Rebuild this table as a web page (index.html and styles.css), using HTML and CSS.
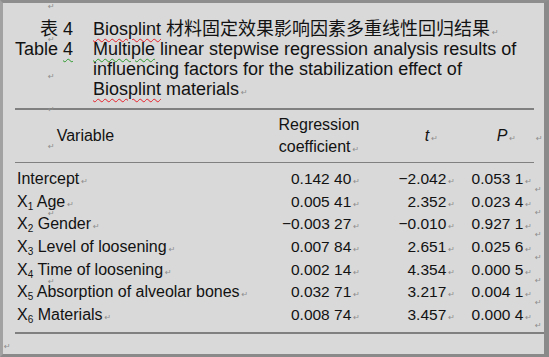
FILE: index.html
```html
<!DOCTYPE html>
<html lang="zh-CN">
<head>
<meta charset="utf-8">
<title>Table 4</title>
<link rel="stylesheet" href="styles.css">
</head>
<body>
<div class="page">
  <span class="stray s1">↵</span>
  <span class="stray s2">↵</span>
  <span class="stray s3">↵</span>
  <span class="stray s4">↵</span>
  <span class="stray s5">↵</span>
  <span class="stray s6">↵</span>

  <div class="caption">
    <div class="cap-row">
      <div class="cap-label"><span class="cn">表</span> 4</div>
      <div class="cap-text"><span class="spell">Biosplint</span> <span class="cn">材料固定效果影响因素多重线性回归结果</span><span class="pm">↵</span></div>
    </div>
    <div class="cap-row">
      <div class="cap-label">Table <span class="gram">4</span></div>
      <div class="cap-text"><span class="gram">Multiple</span> linear stepwise regression analysis results of influencing factors for the stabilization effect of <span class="spell">Biosplint</span> materials<span class="pm">↵</span></div>
    </div>
  </div>

  <table class="reg">
    <colgroup>
      <col class="c1"><col class="c2"><col class="c3"><col class="c4"><col class="c5">
    </colgroup>
    <thead>
      <tr>
        <th class="h-var"><span class="pm low">↵</span>Variable</th>
        <th class="h-coef">Regression<br>coefficient<span class="pm">↵</span></th>
        <th class="h-t"><i>t</i><span class="pm">↵</span></th>
        <th class="h-p"><i>P</i><span class="pm">↵</span></th>
        <th class="end"><span class="pm">↵</span></th>
      </tr>
    </thead>
    <tbody>
      <tr><td class="var">Intercept<span class="pm">↵</span></td><td class="n2">0.142 40<span class="pm">↵</span></td><td class="n3">−2.042<span class="pm">↵</span></td><td class="n4">0.053 1<span class="pm">↵</span></td><td class="end"><span class="pm rowend">↵</span></td></tr>
      <tr><td class="var">X<sub>1</sub> Age<span class="pm">↵</span></td><td class="n2">0.005 41<span class="pm">↵</span></td><td class="n3">2.352<span class="pm">↵</span></td><td class="n4">0.023 4<span class="pm">↵</span></td><td class="end"><span class="pm rowend">↵</span></td></tr>
      <tr><td class="var">X<sub>2</sub> Gender<span class="pm">↵</span></td><td class="n2">−0.003 27<span class="pm">↵</span></td><td class="n3">−0.010<span class="pm">↵</span></td><td class="n4">0.927 1<span class="pm">↵</span></td><td class="end"><span class="pm rowend">↵</span></td></tr>
      <tr><td class="var">X<sub>3</sub> Level of loosening<span class="pm">↵</span></td><td class="n2">0.007 84<span class="pm">↵</span></td><td class="n3">2.651<span class="pm">↵</span></td><td class="n4">0.025 6<span class="pm">↵</span></td><td class="end"><span class="pm rowend">↵</span></td></tr>
      <tr><td class="var">X<sub>4</sub> Time of loosening<span class="pm">↵</span></td><td class="n2">0.002 14<span class="pm">↵</span></td><td class="n3">4.354<span class="pm">↵</span></td><td class="n4">0.000 5<span class="pm">↵</span></td><td class="end"><span class="pm rowend">↵</span></td></tr>
      <tr><td class="var">X<sub>5</sub> Absorption of alveolar bones<span class="pm">↵</span></td><td class="n2">0.032 71<span class="pm">↵</span></td><td class="n3">3.217<span class="pm">↵</span></td><td class="n4">0.004 1<span class="pm">↵</span></td><td class="end"><span class="pm rowend">↵</span></td></tr>
      <tr class="last"><td class="var">X<sub>6</sub> Materials<span class="pm">↵</span></td><td class="n2">0.008 74<span class="pm">↵</span></td><td class="n3">3.457<span class="pm">↵</span></td><td class="n4">0.000 4<span class="pm">↵</span></td><td class="end"><span class="pm rowend">↵</span></td></tr>
    </tbody>
  </table>

  <div class="endmark"><span class="pm">↵</span></div>
</div>
</body>
</html>
```

FILE: styles.css
```css
html, body {
  margin: 0;
  padding: 0;
  background: #d9d9d9;
}

body {
  font-family: "Liberation Sans", Arial, "Noto Sans CJK SC", sans-serif;
  color: #121212;
}

.page {
  position: relative;
  box-sizing: border-box;
  width: 549px;
  height: 357px;
  overflow: hidden;
  background: #d9d9d9;
  border-left: 3px solid #a2a2a2;
  border-top: 3px solid #8e8e8e;
  border-right: 5px solid #8a8a8a;
  border-bottom: 3px solid #8a8a8a;
  padding: 16px 0 0 12px;
}

/* Word formatting marks */
.pm {
  font-family: "DejaVu Sans", sans-serif;
  font-size: 8px;
  line-height: 0;
  color: #8d8d8d;
  margin-left: 2px;
  font-style: normal;
  font-weight: normal;
}

.pm.low {
  margin-left: 0;
  margin-right: 2px;
  vertical-align: -8px;
}

.pm.rowend {
  margin-left: 1px;
  vertical-align: -8px;
}

.stray {
  position: absolute;
  left: 45px;
  font-family: "DejaVu Sans", sans-serif;
  font-size: 8px;
  line-height: 8px;
  color: #8d8d8d;
}
.s1 { top: 0px; }
.s2 { top: 33px; }
.s3 { top: 70px; }
.s4 { top: 103px; }
.s5 { top: 207px; }
.s6 { top: 275px; }

/* caption */
.caption {
  font-size: 18px;
  line-height: 20px;
  margin-left: -2px;
}

.cap-row {
  display: flex;
  align-items: flex-start;
}

.cap-label {
  flex: 0 0 60px;
  text-align: right;
  white-space: nowrap;
}

.cap-text {
  flex: 0 0 437px;
  margin-left: 20px;
}

.cn {
  font-family: "Noto Sans CJK SC", sans-serif;
  font-weight: 400;
  line-height: 0;
}

.spell {
  text-decoration: underline wavy #e8202a;
  text-decoration-thickness: 1px;
  text-underline-offset: 3px;
}

.gram {
  text-decoration: underline wavy #2c9a2c;
  text-decoration-thickness: 1px;
  text-underline-offset: 3px;
}

/* table */
.reg {
  margin-top: 9px;
  width: 529px;
  table-layout: fixed;
  border-collapse: separate;
  border-spacing: 0;
}

.c1 { width: 255px; }
.c2 { width: 98px; }
.c3 { width: 90px; }
.c4 { width: 76px; }
.c5 { width: 10px; }

.reg th {
  font-weight: normal;
  font-size: 16px;
  line-height: 22px;
  padding: 4px 0;
  border-top: 2px solid #808080;
  border-bottom: 1px solid #808080;
  vertical-align: middle;
  white-space: nowrap;
}

.reg th.end,
.reg td.end {
  border-color: transparent;
  text-align: left;
}

.h-var {
  text-align: left;
  padding-left: 33px !important;
}

.h-coef {
  text-align: center;
}

.h-t {
  text-align: right;
  padding-right: 20px !important;
}

.h-p {
  text-align: right;
  padding-right: 18px !important;
}

.reg td {
  font-size: 15.5px;
  line-height: 22.67px;
  padding: 0;
  white-space: nowrap;
  vertical-align: middle;
}

.reg tbody tr:first-child td {
  padding-top: 5px;
}

.reg tr.last td {
  padding-bottom: 5px;
  border-bottom: 2px solid #808080;
}

.reg td.var {
  font-size: 16px;
  text-align: left;
  padding-left: 2px;
}

.var sub {
  font-size: 10px;
  line-height: 0;
  vertical-align: -3px;
}

.reg td.n2 { text-align: right; padding-right: 8px; }
.reg td.n3 { text-align: right; padding-right: 3px; }
.reg td.n4 { text-align: right; padding-right: 2px; }

.endmark {
  margin-left: -11px;
  margin-top: 5px;
  line-height: 10px;
}

.endmark .pm {
  margin-left: 0;
  line-height: 10px;
}
```
